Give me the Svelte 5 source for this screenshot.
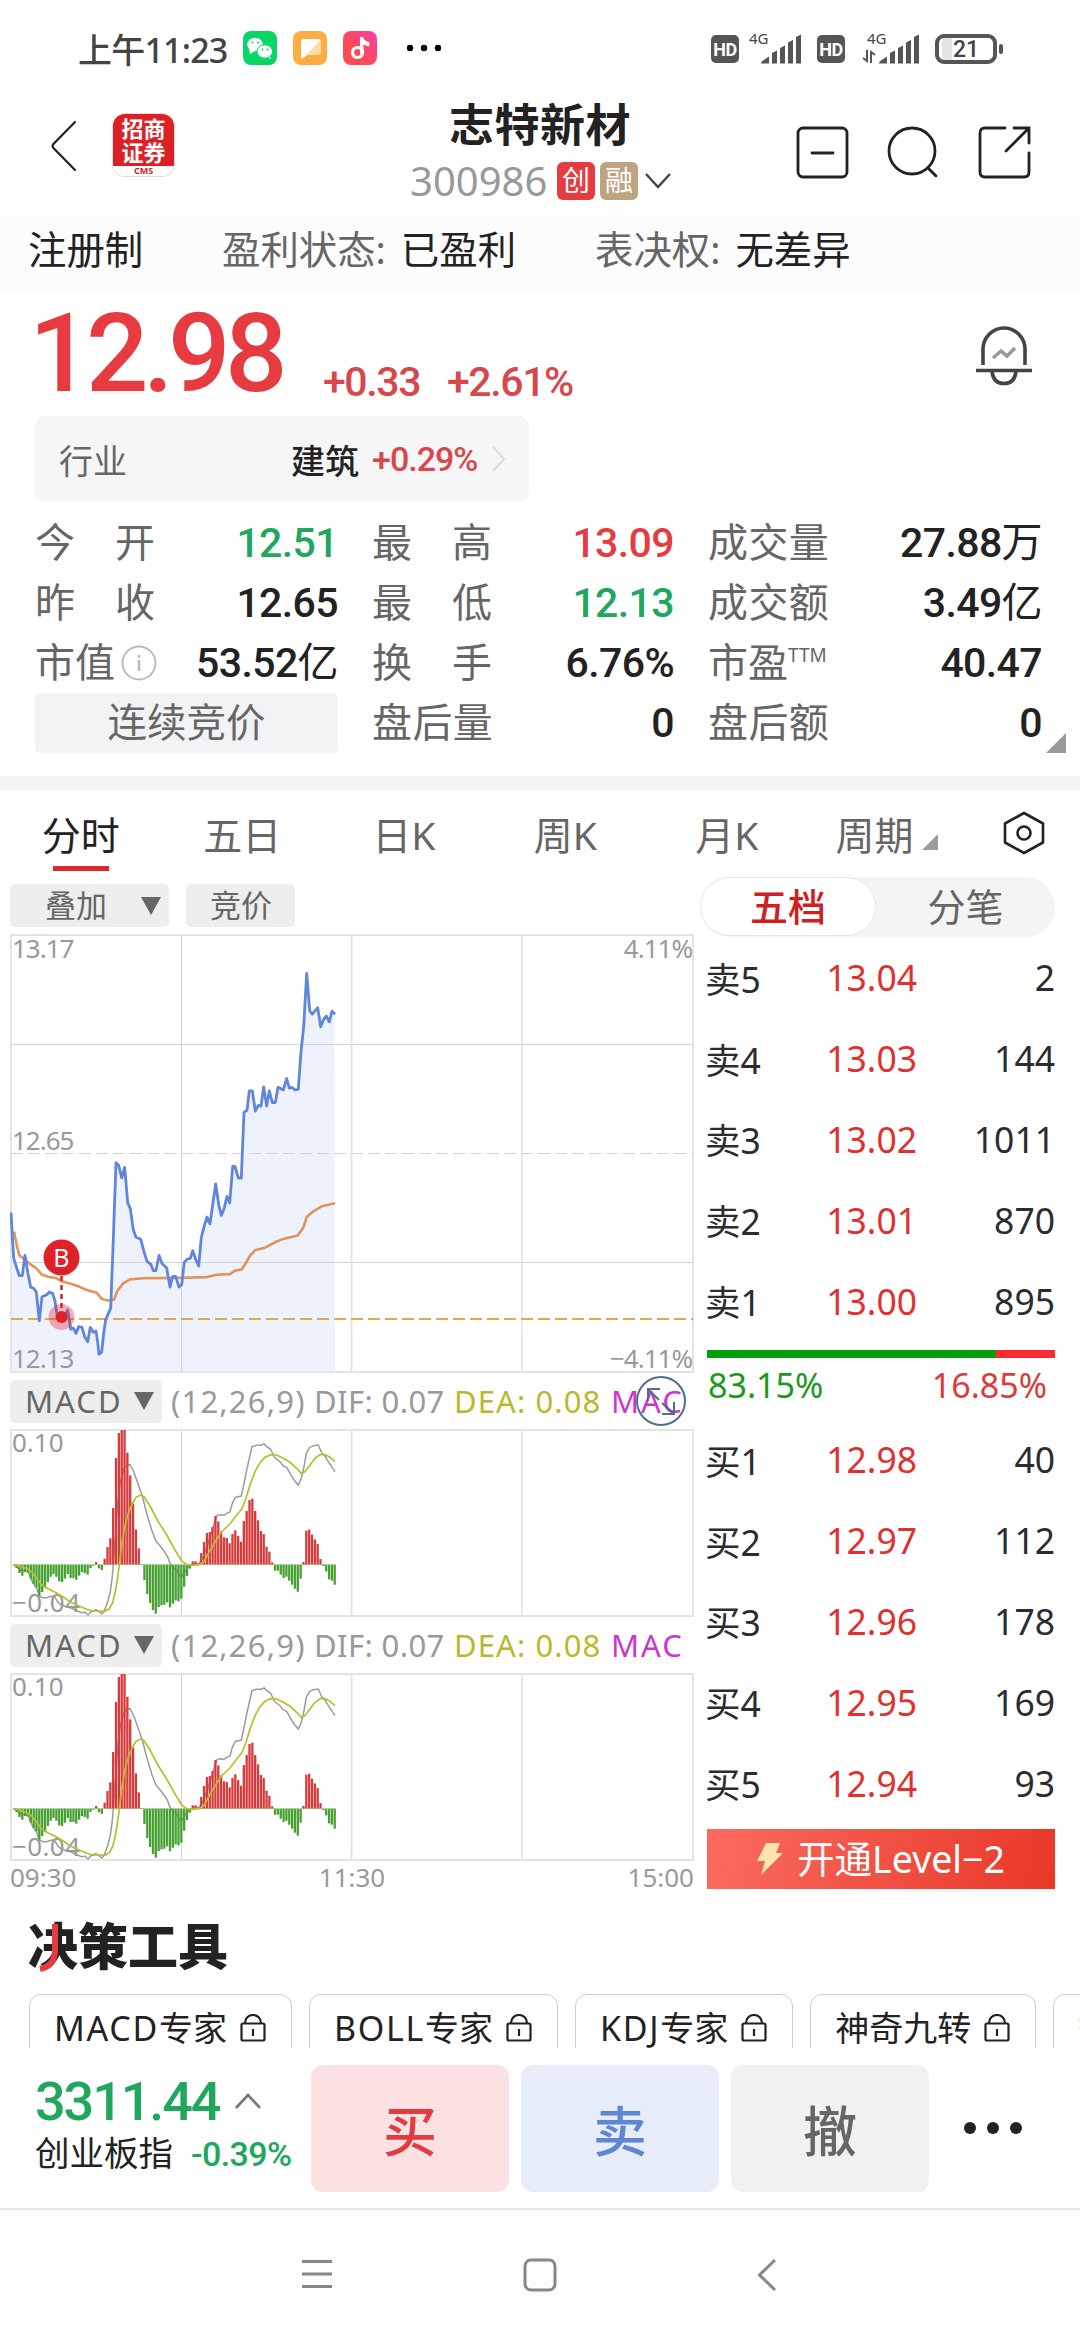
<script>
	let infos = [
		{ label: '', value: '注册制', cls: 'reg' },
		{ label: '盈利状态:', value: '已盈利', cls: 'profit' },
		{ label: '表决权:', value: '无差异', cls: 'vote' }
	]
	let stats = [
		{ label: '今 开', value: '12.51', color: 'green' },
		{ label: '最 高', value: '13.09', color: 'red' },
		{ label: '成 交 量', value: '27.88', unit: '万' },
		{ label: '昨 收', value: '12.65' },
		{ label: '最 低', value: '12.13', color: 'green' },
		{ label: '成 交 额', value: '3.49', unit: '亿' },
		{ label: '市值', value: '53.52', unit: '亿', info: true },
		{ label: '换 手', value: '6.76%' },
		{ label: '市盈', value: '40.47', sup: 'TTM' },
		{ button: '连续竞价' },
		{ label: '盘 后 量', value: '0' },
		{ label: '盘 后 额', value: '0' }
	]
	let tabs = ['分时', '五日', '日K', '周K', '月K']
	let sells = [
		['卖5', '13.04', 2],
		['卖4', '13.03', 144],
		['卖3', '13.02', 1011],
		['卖2', '13.01', 870],
		['卖1', '13.00', 895]
	]
	let buys = [
		['买1', '12.98', 40],
		['买2', '12.97', 112],
		['买3', '12.96', 178],
		['买4', '12.95', 169],
		['买5', '12.94', 93]
	]
	let tools = [['MACD', '专家'], ['BOLL', '专家'], ['KDJ', '专家'], ['', '神奇九转'], ['', '智能选股']]
	let sell_share = 83.15

	// recorded coordinates -> panel pixels
	let scale = (raw, x0, y0, sy) => raw.trim().split(/\s+/).map(p => {
		let [x, y] = p.split(',').map(Number)
		return `${((x - x0) / 3).toFixed(1)},${((y - y0) / sy).toFixed(1)}`
	}).join(' ')

	let price = scale(`33,1130 37,1190 41,1250 50,1275 58,1295 67,1295 75,1242 84,1290 92,1325 101,1328 109,1338 118,1413
		126,1350 140,1345 148,1338 158,1342 165,1362 172,1400 180,1412 190,1405 203,1385 212,1435 220,1432 228,1446
		236,1428 246,1430 254,1455 263,1468 271,1430 280,1443 288,1440 293,1470 297,1500 305,1495 311,1445 317,1410
		332,1380 340,1200 348,1000 356,1007 365,1040 374,1012 383,1105 391,1120 400,1175 408,1195 422,1200 433,1235
		441,1258 452,1265 460,1282 468,1282 477,1242 486,1263 500,1275 510,1325 518,1297 527,1297 537,1325 545,1318
		553,1260 562,1252 571,1250 578,1230 588,1255 596,1270 604,1195 613,1165 621,1142 630,1160 638,1110 647,1055
		656,1110 664,1138 673,1118 681,1088 689,1105 698,1010 705,1010 715,1040 724,1040 732,868 741,863 748,812
		757,812 766,865 775,850 783,852 791,802 800,852 808,812 817,843 826,843 834,803 850,810 860,780 868,805
		876,803 885,810 895,808 903,710 911,645 920,505 929,603 937,612 945,603 953,595 962,645 971,625 979,617
		988,632 996,604 1005,612`, 33, 405, 2.613)
	let average = scale(`42,1180 50,1215 58,1242 70,1250 90,1265 108,1275 125,1292 145,1298 170,1302 185,1310 210,1316
		235,1323 260,1333 290,1340 305,1356 325,1360 342,1358 352,1335 370,1315 390,1305 430,1302 545,1301 620,1299
		650,1293 690,1291 705,1282 725,1279 735,1266 750,1243 765,1229 795,1222 830,1206 850,1199 893,1190 910,1170
		920,1142 940,1127 965,1114 1005,1106`, 33, 405, 2.613)
	let dif = scale(`42,434 50,440 60,450 75,452 85,455 92,475 100,490 110,505 118,528 128,533 140,533 155,528 165,532
		175,548 185,555 200,560 215,565 230,572 245,578 255,577 264,585 273,575 288,569 298,576 306,582 314,570
		323,545 331,515 337,470 341,420 347,330 354,240 362,180 372,145 380,136 390,134 400,152 412,185 427,228
		440,280 455,330 467,362 480,377 492,393 502,408 510,430 520,443 530,450 544,472 553,458 565,440 580,432
		595,434 610,410 622,378 634,340 646,300 652,286 662,284 672,286 680,280 690,276 697,250 706,232 724,228
		732,190 740,150 748,115 756,80 770,76 785,76 792,71 800,80 812,88 823,112 840,125 850,138 860,142 870,160
		882,180 895,195 904,175 911,145 919,100 928,83 940,77 955,75 965,98 975,108 985,125 1005,155`, 33, 30, 3)
	let dea = scale(`42,434 60,438 80,446 95,456 110,475 125,495 145,507 165,517 185,528 210,545 235,557 260,568
		280,573 300,573 315,574 328,566 338,548 345,520 352,480 358,435 366,370 374,320 385,280 398,248 408,232
		422,225 432,230 450,258 475,305 500,345 525,390 545,423 560,434 580,436 600,433 612,425 625,400 640,375
		655,350 665,335 690,312 710,285 725,267 738,235 750,195 765,155 780,128 795,112 812,104 830,105 850,115
		870,127 890,145 905,161 915,155 930,135 945,115 960,104 975,104 990,112 1005,125`, 33, 30, 3)

	// one bar per minute
	let bars = [-3, -10, -25, -33, -22, -24, -42, -58, -68, -92, -82, -70, -52, -36, -28, -36, -50, -52, -42, -28,
		-40, -40, -45, -33, -22, -25, -30, -10, -3, 8, -11, -16, 18, 53, 79, 170, 320, 395, 404, 404, 336, 268, 184,
		106, 49, 2, -46, -88, -115, -136, -147, -127, -122, -120, -113, -128, -117, -107, -110, -102, -66, -34, -12,
		10, 10, 5, 35, 68, 95, 98, 113, 146, 130, 100, 82, 80, 64, 92, 103, 86, 69, 131, 161, 194, 198, 161, 133,
		101, 92, 54, 39, 7, -18, -18, -30, -40, -36, -48, -60, -72, -81, -42, 8, 102, 105, 90, 76, 62, 17, -4, -20,
		-44, -48, -60].map(v => v / 3)
	let zero = 134.7
</script>

{#snippet signal()}
	<svg class="signal" viewBox="0 0 40 30" width="40" height="30">
		<path d="M0 29.5q0-2 2-3l6-4v7zM11 29.5V19l5-2.5v13zM19 29.5V14l5-2.5v18zM27 29.5V8.500l5-2.5v23.500zM35 29.500V3l5-2.500v29z" fill="#555" />
	</svg>
{/snippet}

{#snippet macd(expand)}
	<div class="macd-head">
		<span class="pick">MACD<i class="down"></i></span>
		<span class="args">(12,26,9)</span>
		<span class="dif">DIF: 0.07</span>
		<span class="dea">DEA: 0.08</span>
		<span class="mac">MAC</span>
		{#if expand}
			<svg class="expand" viewBox="0 0 50 50" width="50" height="50" fill="none" stroke="#4f6d8c" stroke-width="2">
				<circle cx="25" cy="25" r="24" />
				<path d="M23 24L12 13M12 25V13h12M26 27l12 11M38 26v12H26" />
			</svg>
		{/if}
	</div>
	<svg class="panel" viewBox="0 0 684 188" width="684" height="188">
		<path class="grid" d="M171.500 1v186M512 1v186" />
		<path class="edge" d="M341.500 1v186M1 1h682v186H1z" />
		<g transform="translate(1 1)">
			<text class="wide" x="1" y="22">0.10</text>
			<text class="wide" x="1" y="182" textLength="68">−0.04</text>
			<polyline points={dif} stroke="#999b9d" stroke-width="1.500" fill="none" />
			{#each bars as v, i}
				<rect x={(i + 1) * 2.84 - 1.2} y={v > 0 ? zero - v : zero} width="2.3" height={Math.abs(v)}
					fill={v > 0 ? '#d63a3a' : '#46a032'} />
			{/each}
			<path d="M3 134.700H325" stroke="#8bb868" stroke-width="0.600" />
			<polyline points={dea} stroke="#bdbd2a" stroke-width="1.700" fill="none" />
		</g>
	</svg>
{/snippet}

{#snippet book(rows)}
	<div class="book">
		{#each rows as [name, p, n]}
			<div class="quote"><span>{name}</span><b>{p}</b><em>{n}</em></div>
		{/each}
	</div>
{/snippet}

<main>
	<div class="status">
		<span class="time">上午11:23</span>
		<svg viewBox="0 0 34 34" width="34" height="34">
			<rect width="34" height="34" rx="8" fill="#07d566" />
			<ellipse cx="12" cy="13.500" rx="7.800" ry="6.700" fill="#fff" />
			<path d="M6 17l1 6 5-3zM26 23l2 5-5-2z" fill="#fff" />
			<ellipse cx="21.800" cy="20.500" rx="7.800" ry="6.700" fill="#fff" stroke="#07d566" />
			<g fill="#07d566"><circle cx="9.500" cy="11.500" r="1" /><circle cx="15" cy="11.500" r="1" /><circle cx="19.500" cy="18.500" r="1" /><circle cx="24.500" cy="18.500" r="1" /></g>
		</svg>
		<svg viewBox="0 0 34 34" width="34" height="34">
			<rect width="34" height="34" rx="8" fill="#fdae42" />
			<path d="M10 8h15q2.500 0 2.500 2.500V21q0 2.500-2.500 2.500H15L8 28V10q0-2 2-2z" fill="#fff" />
			<path d="M27.500 9L14 23.500h11q2.500 0 2.500-2.500z" fill="#fddda6" />
		</svg>
		<svg viewBox="0 0 34 34" width="34" height="34">
			<defs><linearGradient id="song" x1="0" y1="1" x2="1" y2="0"><stop offset=".4" stop-color="#ff4a55" /><stop offset="1" stop-color="#f53fa8" /></linearGradient></defs>
			<rect width="34" height="34" rx="8" fill="url(#song)" />
			<circle cx="14.500" cy="21.500" r="5" fill="none" stroke="#fff" stroke-width="3.200" />
			<path d="M17 23V6h3q1 4 6.500 5.500l-.5 4q-3-.5-5.500-2.500V22z" fill="#fff" />
		</svg>
		<svg class="more" viewBox="0 0 36 8" width="36" height="8"><circle cx="4" cy="4" r="3.200" /><circle cx="18" cy="4" r="3.200" /><circle cx="32" cy="4" r="3.200" /></svg>
		<span class="hd">HD</span>
		<span class="net"><small>4G</small>{@render signal()}</span>
		<span class="hd">HD</span>
		<span class="net second"><small>4G</small>
			<svg class="updown" viewBox="0 0 14 13" width="14" height="13" fill="none" stroke="#555" stroke-width="2"><path d="M5 0v11L1 8M9 13V2l4 3" /></svg>
			{@render signal()}
		</span>
		<span class="battery">21</span>
	</div>

	<header>
		<svg class="back" viewBox="0 0 28 54" width="28" height="54"><path d="M25 3L3 25.500q-1 1.500 0 3L25 51" fill="none" stroke="#222" stroke-width="2.200" stroke-linecap="round" /></svg>
		<div class="logo"><b>招商</b><b>证券</b><small>CMS</small></div>
		<div class="name">
			<h1>志特新材</h1>
			<div class="code">
				<span>300986</span><i class="tag chuang">创</i><i class="tag rong">融</i>
				<svg viewBox="0 0 26 16" width="26" height="16"><path d="M1 1l12 13L25 1" fill="none" stroke="#444" stroke-width="2.400" /></svg>
			</div>
		</div>
		<svg class="act" viewBox="0 0 54 54" width="54" height="54"><rect x="2" y="2" width="49" height="49" rx="5" /><path d="M16 27h21" /></svg>
		<svg class="act" viewBox="0 0 54 54" width="54" height="54"><circle cx="25" cy="25" r="23" /><path d="M41 42l8 8" /></svg>
		<svg class="act" viewBox="0 0 54 54" width="54" height="54"><path d="M27 2H7Q2 2 2 7v39q0 5 5 5h39q5 0 5-5V27M36 2h15v15M50 3L28 25" /></svg>
	</header>

	<div class="infos">
		{#each infos as info}
			<div class={info.cls}><span>{info.label}</span>{info.value}</div>
		{/each}
	</div>

	<section class="summary">
		<div class="price red">
			<strong>12.98</strong><span>+0.33</span><span>+2.61%</span>
			<svg viewBox="0 0 58 60" width="58" height="60" fill="none" stroke="#444" stroke-width="3.600">
				<path d="M8 39V23.500a21 21.500 0 0 1 42 0V39M1 44.500h56M17 45q1 12.500 12 12.500T41 45" />
				<path d="M18 32l8-7 6 5 8-8" stroke="#999" />
			</svg>
		</div>
		<div class="industry">
			<span>行业</span><b>建筑</b><em class="red">+0.29%</em>
			<svg viewBox="0 0 14 26" width="14" height="26"><path d="M1 1l11 12L1 25" fill="none" stroke="#dcdcdc" stroke-width="2" /></svg>
		</div>
		<div class="stats">
			{#each stats as s}
				{#if s.button}
					<div class="auction">{s.button}</div>
				{:else}
					<div class="stat">
						<span class="label" class:tight={s.info || s.sup}>{s.label}{#if s.sup}<sup>{s.sup}</sup>{/if}</span>
						{#if s.info}
							<svg viewBox="0 0 36 36" width="36" height="36"><circle cx="18" cy="18" r="16.500" fill="none" stroke="#bbb" stroke-width="2" /><path d="M18 15v11M18 10v3" stroke="#bbb" stroke-width="2.500" /></svg>
						{/if}
						<span class="value {s.color}">{s.value}{#if s.unit}<u>{s.unit}</u>{/if}</span>
					</div>
				{/if}
			{/each}
			<i class="corner"></i>
		</div>
	</section>

	<nav class="tabs">
		{#each tabs as tab, i}
			<span class:on={i === 0}>{tab}</span>
		{/each}
		<span class="period">周期<i></i></span>
		<svg viewBox="0 0 42 44" width="42" height="44" fill="none" stroke="#222" stroke-width="2.600"><path d="M21 2l19 10.500v19L21 42 2 31.500v-19z" stroke-linejoin="round" /><circle cx="21" cy="22" r="6.500" /></svg>
	</nav>

	<section class="trade">
		<div class="charts">
			<div class="picks"><span class="pick overlay">叠加<i class="down"></i></span><span class="pick bid">竞价</span></div>
			<svg class="panel" viewBox="0 0 684 439" width="684" height="439">
				<polygon points="1,438 {price} 325,438" fill="#eef2fd" transform="translate(0 1)" />
				<path class="grid" d="M1 110.500h682M1 328.500h682M171.500 1v437M512 1v437" />
				<path class="grid" d="M1 219.500h682" stroke-dasharray="12 5" />
				<path class="edge" d="M341.500 1v437M1 1h682v437H1z" />
				<text x="2" y="24">13.17</text>
				<text x="2" y="216">12.65</text>
				<text x="2" y="434">12.13</text>
				<text x="682" y="24" text-anchor="end">4.11%</text>
				<text x="682" y="434" text-anchor="end">−4.11%</text>
				<path d="M1 385h682" stroke="#e6a84b" stroke-width="2" stroke-dasharray="12 5" />
				<g transform="translate(1 1)" fill="none" stroke-linejoin="round">
					<polyline points={average} stroke="#e0935a" stroke-width="2.600" />
					<polyline points={price} stroke="#5f86da" stroke-width="2.800" />
				</g>
				<path d="M51.500 342v35" stroke="#c9232d" stroke-width="2.500" stroke-dasharray="5 4" />
				<circle cx="51.500" cy="383" r="13" fill="#e02127" opacity=".35" />
				<circle cx="51.500" cy="383" r="6" fill="#e02127" />
				<circle cx="51.500" cy="323.500" r="18" fill="#e02127" />
				<text class="mark" x="51.500" y="333" text-anchor="middle">B</text>
			</svg>
			{@render macd(true)}
			{@render macd(false)}
			<div class="times"><span>09:30</span><span>11:30</span><span>15:00</span></div>
		</div>

		<div class="orders">
			<div class="toggle"><span class="on">五档</span><span>分笔</span></div>
			{@render book(sells)}
			<div class="ratio"><i style="width: {sell_share}%"></i></div>
			<div class="shares"><span>83.15%</span><span>16.85%</span></div>
			{@render book(buys)}
			<div class="level">
				<svg viewBox="0 0 26 32" width="26" height="32"><path d="M9 0h14l-4 10h7L4 32l4-14H0z" fill="#ffe3b0" /></svg>
				开通Level−2
			</div>
		</div>
	</section>

	<section class="tools">
		<h2>决策工具
			<svg viewBox="0 0 24 48" width="24" height="48"><path d="M17 0v26q0 16-15 19" fill="none" stroke="#e63c41" stroke-width="6" /></svg>
		</h2>
		<div class="chips">
			{#each tools as [code, name]}
				<div class="chip">
					<span><em>{code}</em>{name}</span>
					<svg viewBox="0 0 26 28" width="26" height="28" fill="none" stroke="#222" stroke-width="2.200"><rect x="1.500" y="9.500" width="23" height="17" rx="1.500" /><path d="M5 9a8 8 0 0 1 16 0M13 15v7" /></svg>
				</div>
			{/each}
		</div>
	</section>

	<footer>
		<div class="index">
			<div class="points">3311.44<svg viewBox="0 0 26 16" width="26" height="16"><path d="M1 15L13 2l12 13" fill="none" stroke="#777" stroke-width="2.600" /></svg></div>
			<div class="board">创业板指<em>-0.39%</em></div>
		</div>
		<button class="buy">买</button>
		<button class="sell">卖</button>
		<button class="cancel">撤</button>
		<svg class="dots" viewBox="0 0 60 14" width="60" height="14" fill="#222"><circle cx="7" cy="7" r="6" /><circle cx="30" cy="7" r="6" /><circle cx="53" cy="7" r="6" /></svg>
	</footer>

	<div class="system">
		<svg viewBox="0 0 32 32" width="32" height="32"><path d="M1 3.500h30M1 16h30M1 28.500h30" /></svg>
		<svg viewBox="0 0 34 34" width="34" height="34"><rect x="2" y="2" width="30" height="30" rx="6" /></svg>
		<svg viewBox="0 0 20 34" width="20" height="34"><path d="M18 2L2.500 17 18 32" /></svg>
	</div>
</main>

<style>
	:global(body) {
		background: #fff;
	}

	main {
		width: 1080px;
		height: 2340px;
		display: flex;
		flex-direction: column;
		overflow: hidden;
		background: #fff;
		color: #222;
		font-family: "Noto Sans", "Noto Sans CJK SC", sans-serif;
		font-size: 36px;
		white-space: nowrap;
	}

	svg {
		flex: none;
		display: block;
	}

	i, em, u {
		font-style: normal;
		text-decoration: none;
	}

	.red {
		color: #e63c41;
	}

	.green {
		color: #21a65e;
	}

	.status {
		height: 96px;
		box-sizing: border-box;
		padding-left: 78px;
		display: flex;
		align-items: center;
		color: #444;
	}

	.time {
		width: 165px;
		font-size: 34px;
		font-weight: 500;
		letter-spacing: -0.8px;
	}

	.status > svg {
		margin-right: 16px;
	}

	.status > .more {
		margin: 0 269px 0 13px;
	}

	.hd {
		width: 28px;
		height: 28px;
		margin-top: 2px;
		border-radius: 5px;
		background: #555;
		color: #fff;
		font: bold 18px/29px Roboto, sans-serif;
		text-align: center;
		letter-spacing: -0.5px;
	}

	.net {
		position: relative;
		width: 52px;
		height: 32px;
		margin: 0 16px 0 10px;
		display: flex;
		justify-content: flex-end;
	}

	.net.second {
		width: 57px;
		margin-left: 17px;
	}

	.net small {
		position: absolute;
		left: 0;
		top: -1px;
		font-size: 15px;
		line-height: 15px;
	}

	.second small {
		left: 5px;
	}

	.updown {
		position: absolute;
		left: 0;
		bottom: 1px;
	}

	.signal {
		margin-top: 2px;
	}

	.battery {
		position: relative;
		width: 54px;
		height: 22px;
		border: 4px solid #555;
		border-radius: 9px;
		font: 500 23px/24px Roboto, sans-serif;
		text-align: center;
		margin-top: 2px;
		background: linear-gradient(90deg, transparent 3px, #e4e4e4 3px, #e4e4e4 13px, transparent 13px);
	}

	.battery::after {
		content: '';
		position: absolute;
		right: -10px;
		top: 6px;
		width: 4px;
		height: 10px;
		border-radius: 2px;
		background: #555;
	}

	header {
		height: 114px;
		display: flex;
		align-items: flex-start;
	}

	.back {
		margin: 23px 35px 0 50px;
	}

	.logo {
		width: 61px;
		height: 62px;
		box-sizing: border-box;
		padding-top: 3px;
		margin: 18px 0 0;
		border-radius: 12px;
		background: linear-gradient(#db2126 52px, #fff 52px);
		box-shadow: 0 0 0 1px #e6d9d9;
		display: flex;
		flex-direction: column;
		align-items: center;
		color: #fff;
	}

	.logo b {
		font-size: 22px;
		line-height: 23.5px;
	}

	.logo small {
		color: #c22;
		font: bold 9px/11px "Noto Sans", sans-serif;
		margin-top: 1px;
	}

	.name {
		width: 460px;
		margin-left: 136px;
	}

	h1 {
		margin: 0;
		padding-left: 139px;
		font-size: 45px;
		line-height: 58px;
		font-weight: 700;
		letter-spacing: 0.5px;
	}

	.code {
		padding-left: 100px;
		height: 54px;
		display: flex;
		align-items: center;
		color: #999;
		font-size: 40px;
		line-height: 54px;
	}

	.code span {
		width: 147px;
	}

	.tag {
		width: 38px;
		height: 38px;
		margin-right: 5px;
		border-radius: 6px;
		color: #fff;
		font-size: 28px;
		line-height: 37px;
		text-align: center;
	}

	.chuang {
		background: #e63c41;
	}

	.rong {
		background: #bda581;
	}

	.code svg {
		margin-left: 2px;
	}

	.act {
		margin: 30px 37px 0 0;
		fill: none;
		stroke: #222;
		stroke-width: 2.8;
		stroke-linecap: round;
	}

	.name + .act {
		margin-left: 26px;
	}

	.infos {
		height: 80px;
		line-height: 78px;
		display: flex;
		background: #fcfcfc;
		font-size: 38.4px;
		color: #222;
	}

	.infos span {
		color: #666;
	}

	.reg {
		width: 194px;
		padding-left: 28px;
	}

	.profit {
		width: 373px;
	}

	.profit span, .vote span {
		margin-right: 15px;
	}

	.summary {
		height: 500px;
		box-sizing: border-box;
		border-bottom: 14px solid #f1f3f5;
		padding: 0 38px 0 35px;
	}

	.price {
		height: 126px;
		display: flex;
		align-items: flex-end;
		font-family: Roboto, sans-serif;
		font-weight: 500;
	}

	.price strong {
		width: 288px;
		font-size: 110px;
		line-height: 124px;
		font-weight: 500;
		letter-spacing: -5.5px;
		text-indent: -6px;
	}

	.price span {
		width: 124px;
		font-size: 41px;
		line-height: 68px;
		letter-spacing: -1.4px;
		color: #d8474b;
	}

	.price svg {
		margin: 0 0 30px 404px;
	}

	.industry {
		width: 494px;
		height: 86px;
		box-sizing: border-box;
		padding: 0 23px 0 24px;
		border-radius: 11px;
		background: #f6f6f6;
		display: flex;
		align-items: center;
		font-size: 34px;
	}

	.industry span {
		flex: 1;
		color: #666;
	}

	.industry b {
		font-weight: 500;
	}

	.industry em {
		width: 108px;
		margin: 0 12px 0 13px;
		color: #d8474b;
		font: 500 34px Roboto, sans-serif;
		letter-spacing: -1px;
	}

	.stats {
		position: relative;
		margin-top: 11px;
		display: grid;
		grid-template-columns: 303px 302px 334px;
		column-gap: 34px;
		grid-auto-rows: 60px;
	}

	.stat {
		display: flex;
		align-items: center;
	}

	.label {
		width: 120px;
		height: 60px;
		line-height: 58px;
		font-size: 40px;
		color: #666;
		text-align-last: justify;
	}

	.tight {
		width: auto;
		text-align-last: left;
	}

	.label:not(.tight) {
		word-spacing: -10px;
	}

	.label sup {
		font-size: 19px;
		line-height: 20px;
		vertical-align: 15px;
	}

	.stat svg {
		margin-left: 6px;
	}

	.value {
		margin-left: auto;
		font: 500 41px/60px Roboto, "Noto Sans CJK SC", sans-serif;
		letter-spacing: -0.6px;
	}

	.value u {
		font-weight: 400;
	}

	.auction {
		height: 60px;
		line-height: 58px;
		border-radius: 5px;
		background: #f1f3f5;
		color: #666;
		font-size: 39.5px;
		text-align: center;
	}

	.corner {
		position: absolute;
		right: -24px;
		bottom: 0;
		border: 10px solid #999;
		border-top-color: transparent;
		border-left-color: transparent;
	}

	.tabs {
		height: 94px;
		display: flex;
		align-items: flex-start;
		color: #666;
		font-size: 39px;
		line-height: 89px;
	}

	.tabs span {
		width: 161.5px;
		text-align: center;
	}

	.tabs .on {
		position: relative;
		color: #222;
	}

	.tabs .on::after {
		content: '';
		position: absolute;
		left: 53px;
		top: 76px;
		width: 56px;
		height: 5px;
		background: #d92b2b;
	}

	.tabs .period {
		width: 158px;
		margin-right: 22px;
		padding-right: 15px;
	}

	.period i {
		display: inline-block;
		margin-left: 8px;
		border: 8.5px solid #a29a9a;
		border-top-color: transparent;
		border-left-color: transparent;
	}

	.tabs > svg {
		margin-top: 21px;
	}

	.trade {
		height: 1020px;
		display: flex;
	}

	.charts {
		width: 684px;
		padding-left: 10px;
	}

	.picks {
		height: 50px;
		display: flex;
	}

	.pick {
		height: 43px;
		box-sizing: border-box;
		border-radius: 5px;
		background: #eee;
		color: #666;
		font-size: 31px;
		line-height: 41px;
		display: flex;
		align-items: center;
	}

	.down {
		border: 10px solid transparent;
		border-top: 18px solid #666;
		border-bottom: 0;
	}

	.overlay {
		width: 159px;
		padding-left: 35px;
		margin-right: 17px;
	}

	.overlay .down {
		margin-left: 34px;
	}

	.bid {
		width: 109px;
		padding-left: 24px;
	}

	.panel {
		overflow: hidden;
	}

	.panel text {
		font-size: 26px;
		letter-spacing: -1px;
		fill: #999;
	}

	.panel .wide {
		letter-spacing: 0;
	}

	.panel .mark {
		font-size: 25px;
		letter-spacing: 0;
		fill: #fff;
	}

	.grid {
		fill: none;
		stroke: #d3d3d3;
		stroke-width: 1;
	}

	.edge {
		fill: none;
		stroke: #e4e4e4;
		stroke-width: 2;
	}

	.macd-head {
		position: relative;
		height: 44px;
		padding: 6px 0;
		display: flex;
		align-items: center;
		font-size: 31px;
		line-height: 44px;
		color: #999;
	}

	.macd-head .pick {
		width: 152px;
		padding-left: 15px;
		letter-spacing: 2px;
	}

	.macd-head .down {
		margin-left: 11px;
	}

	.args {
		width: 143px;
		margin-left: 9px;
		letter-spacing: 1.2px;
	}

	.dif {
		width: 140px;
		letter-spacing: 0.4px;
	}

	.dea {
		width: 157px;
		color: #b9b92b;
		letter-spacing: 1.1px;
	}

	.mac {
		color: #cd35cf;
		letter-spacing: 2px;
	}

	.expand {
		position: absolute;
		left: 626px;
		top: 3px;
	}

	.times {
		display: flex;
		justify-content: space-between;
		font-size: 26px;
		line-height: 32px;
		color: #999;
	}

	.orders {
		width: 355px;
		margin: -7px 0 0 6px;
	}

	.toggle {
		height: 60px;
		border-radius: 30px;
		background: #f4f4f4;
		display: flex;
		font-size: 38px;
		color: #666;
	}

	.toggle span {
		flex: 1;
		line-height: 59px;
		text-align: center;
	}

	.toggle .on {
		flex: none;
		width: 174px;
		height: 57px;
		border: 1.5px solid #e6e6e6;
		border-radius: 30px;
		background: #fff;
		color: #cf2020;
		font-weight: 500;
		line-height: 56px;
	}

	.quote {
		height: 80.8px;
		padding-left: 5px;
		display: flex;
		align-items: center;
		font-size: 35.5px;
		color: #2a2c30;
	}

	.quote span {
		width: 90px;
	}

	.quote b {
		width: 122px;
		font-weight: 400;
		text-align: right;
		color: #e03030;
	}

	.quote em {
		flex: 1;
		text-align: right;
	}

	.ratio {
		height: 8px;
		margin: 9px 0 0 7px;
		background: #ff2a2e;
	}

	.ratio i {
		display: block;
		height: 8px;
		background: #00a008;
	}

	.shares {
		display: flex;
		justify-content: space-between;
		padding: 0 8px 0 8px;
		height: 61px;
		line-height: 54px;
		font-size: 34px;
		color: #1a991a;
	}

	.shares span + span {
		color: #dc3b3b;
	}

	.level {
		height: 60px;
		margin: 6px 0 0 7px;
		background: linear-gradient(100deg, #fb6b60, #e83828);
		color: #fff;
		font-size: 37.5px;
		line-height: 60px;
		display: flex;
		align-items: center;
		justify-content: center;
		gap: 14px;
	}

	.tools {
		height: 144px;
		overflow: hidden;
	}

	h2 {
		position: relative;
		height: 90px;
		margin: 0;
		padding-left: 28px;
		font-size: 50px;
		line-height: 84px;
		font-weight: 900;
	}

	h2 svg {
		position: absolute;
		left: 38px;
		top: 20px;
	}

	.chips {
		display: flex;
		gap: 17px;
		padding-left: 29px;
	}

	.chip {
		flex: none;
		height: 80px;
		box-sizing: border-box;
		padding: 0 25px 0 24px;
		border: 1.5px solid #ccc;
		border-radius: 12px;
		display: flex;
		align-items: flex-start;
		gap: 13px;
		font-size: 34px;
		line-height: 66px;
	}

	.chip em {
		letter-spacing: 1.7px;
	}

	.chip svg {
		margin-top: 19px;
	}

	footer {
		height: 162px;
		box-sizing: border-box;
		border-bottom: 2px solid #e6e6e6;
		padding: 17px 0 0 35px;
		display: flex;
	}

	.index {
		width: 276px;
		color: #21a65e;
		font-family: Roboto, "Noto Sans CJK SC", sans-serif;
		font-weight: 500;
	}

	.points {
		display: flex;
		align-items: center;
		gap: 16px;
		height: 72px;
		font-size: 54px;
		letter-spacing: -2.1px;
	}

	.board {
		color: #222;
		font-size: 34.5px;
		line-height: 34px;
		font-weight: 400;
	}

	.board em {
		margin-left: 18px;
		color: #21a65e;
		font-size: 34px;
		font-weight: 500;
		letter-spacing: -0.6px;
	}

	button {
		width: 198px;
		height: 127px;
		margin-right: 12px;
		padding: 0;
		border: 0;
		border-radius: 12px;
		font: 500 54px/120px "Noto Sans CJK SC", sans-serif;
	}

	.buy {
		background: #fce1e2;
		color: #e23c41;
	}

	.sell {
		background: #e6edf9;
		color: #5f86d2;
	}

	.cancel {
		background: #f1f1f1;
		color: #666;
	}

	.dots {
		margin: 56px 0 0 22px;
	}

	.system {
		flex: 1;
		display: flex;
		align-items: flex-start;
		padding-left: 301px;
		background: #fdfdfd;
		fill: none;
		stroke: #888;
		stroke-width: 3;
	}

	.system svg {
		margin: 48px 190px 0 0;
	}

	.system svg + svg {
		margin-right: 200px;
	}
</style>
